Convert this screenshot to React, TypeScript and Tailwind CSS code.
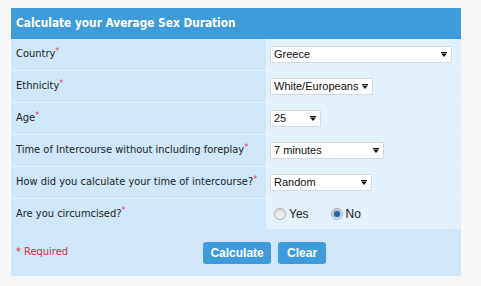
import { useState } from "react";

const rows = [
  { label: "Country", value: "Greece", width: "w-[182px]", options: ["Greece", "Italy", "Spain"] },
  { label: "Ethnicity", value: "White/Europeans", width: "w-[103px]", options: ["White/Europeans", "Asian", "African"] },
  { label: "Age", value: "25", width: "w-[51px]", options: ["25", "30", "35"] },
  { label: "Time of Intercourse without including foreplay", value: "7 minutes", width: "w-[114px]", options: ["7 minutes", "10 minutes"] },
  { label: "How did you calculate your time of intercourse?", value: "Random", width: "w-[102px]", options: ["Random", "Stopwatch"] },
];

function Select({ value, width, options }: { value: string; width: string; options: string[] }) {
  const [val, setVal] = useState(value);
  return (
    <div className={`relative h-[17px] ${width}`}>
      <select
        value={val}
        onChange={(e) => setVal(e.target.value)}
        className="block h-[17px] w-full appearance-none rounded-[1px] border border-[#d4d9de] bg-white py-0 pl-[3px] pr-[10px] text-[11px] leading-[15px] text-[#111] outline-none font-['Liberation_Sans',Arial,sans-serif]"
      >
        {options.map((o) => (
          <option key={o}>{o}</option>
        ))}
      </select>
      <svg className="pointer-events-none absolute right-[5px] top-[6px]" width="6" height="5" viewBox="0 0 6 5">
        <rect x="0" y="0" width="6" height="1" fill="#111" />
        <path d="M0 1.5 H6 L3 5 Z" fill="#111" />
      </svg>
    </div>
  );
}

function Radio({ checked, label, onClick }: { checked: boolean; label: string; onClick: () => void }) {
  return (
    <label className="flex cursor-pointer items-center gap-[3px]" onClick={onClick}>
      <span className="flex h-[12px] w-[12px] items-center justify-center rounded-full border border-[#a9adb1] bg-gradient-to-b from-[#dcdcdc] to-[#f8f8f8]">
        {checked && <span className="h-[6px] w-[6px] rounded-full bg-[#2a66a8] shadow-[0_0_1px_1px_#8fb6df]" />}
      </span>
      <span className="text-[12px] text-[#222] font-['Liberation_Sans',Arial,sans-serif]">{label}</span>
    </label>
  );
}

function Star() {
  return <span className="relative top-[-3px] text-[9px] text-[#e0406a]">*</span>;
}

export default function App() {
  const [circ, setCirc] = useState("no");

  return (
    <div className="min-h-[286px] w-[481px] bg-[#f7f7f7] pl-[11px] pt-[8px] font-['DejaVu_Sans_Condensed','DejaVu_Sans',Verdana,sans-serif]">
      <div className="w-[450px]">
        <div className="flex h-[31px] items-center bg-[#3e9cdc] px-[5px] text-[11.75px] font-bold text-white">
          Calculate your Average Sex Duration
        </div>

        {rows.map((r) => (
          <div key={r.label} className="grid h-[32px] grid-cols-[255px_195px] border-b border-[#e8f4fd]">
            <div className="flex items-center whitespace-nowrap bg-[#cfe7f9] px-[5px] text-[11px] text-[#222]">
              {r.label}
              <Star />
            </div>
            <div className="flex items-center bg-[#e3f1fc] px-[4px]">
              <Select value={r.value} width={r.width} options={r.options} />
            </div>
          </div>
        ))}

        <div className="grid h-[30px] grid-cols-[255px_195px]">
          <div className="flex items-center whitespace-nowrap bg-[#cfe7f9] px-[5px] text-[11px] text-[#222]">
            Are you circumcised?
            <Star />
          </div>
          <div className="flex items-center gap-[22px] bg-[#e3f1fc] pl-[8px]">
            <Radio checked={circ === "yes"} label="Yes" onClick={() => setCirc("yes")} />
            <Radio checked={circ === "no"} label="No" onClick={() => setCirc("no")} />
          </div>
        </div>

        <div className="flex h-[47px] items-center bg-[#cfe7f9] px-[5px]">
          <span className="text-[11px] text-[#d0313d]">* Required</span>
          <div className="ml-[135px] flex gap-[7px]">
            <button className="h-[22px] w-[68px] rounded-[3px] bg-[#3e9cdc] text-[12px] font-bold text-white font-['Liberation_Sans',Arial,sans-serif]">
              Calculate
            </button>
            <button className="h-[22px] w-[48px] rounded-[3px] bg-[#3e9cdc] text-[12px] font-bold text-white font-['Liberation_Sans',Arial,sans-serif]">
              Clear
            </button>
          </div>
        </div>
      </div>
    </div>
  );
}
